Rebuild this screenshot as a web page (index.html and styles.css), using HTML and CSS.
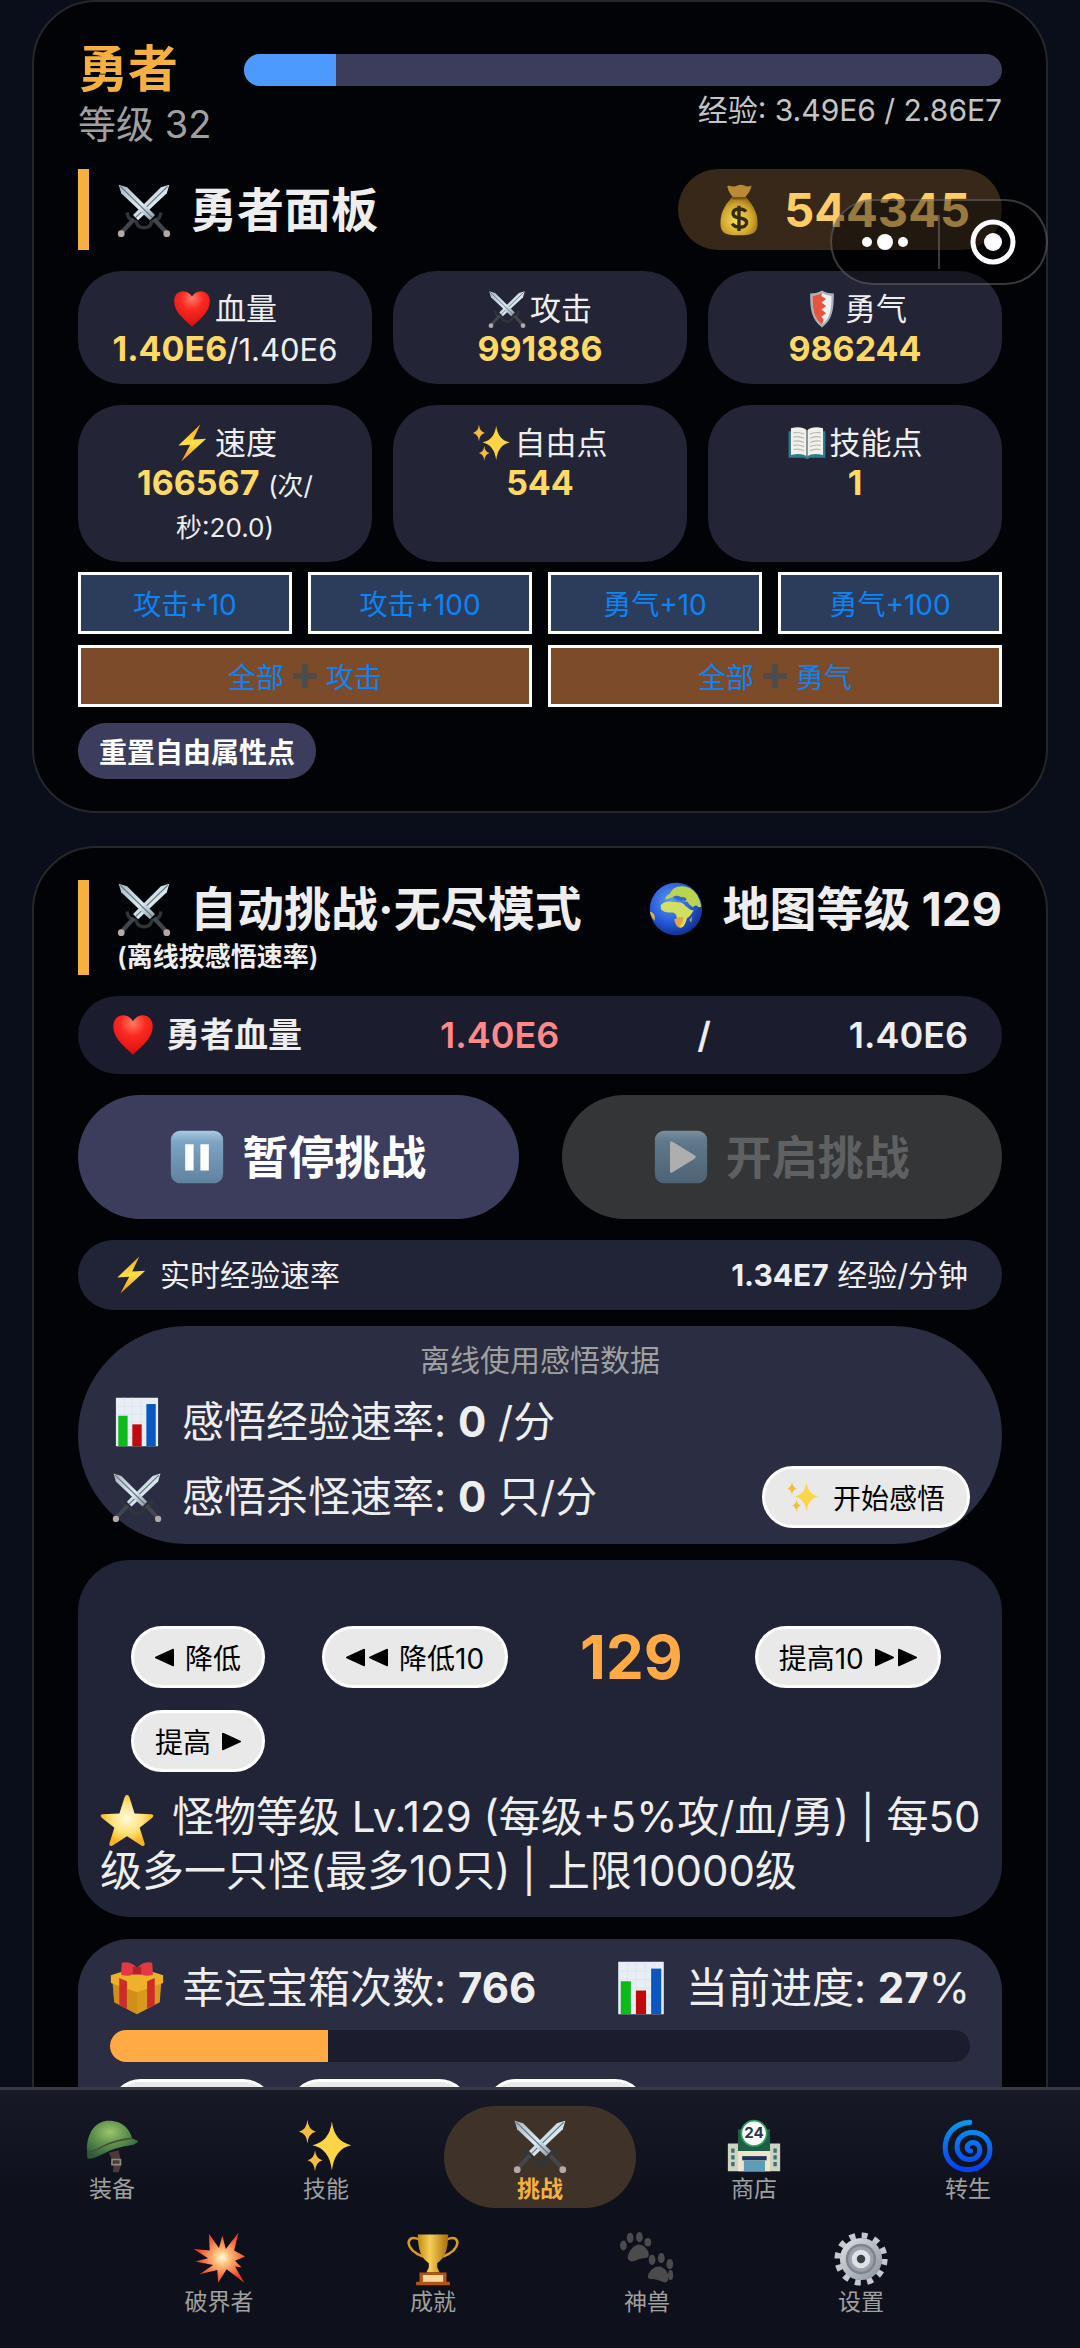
FILE: index.html
```html
<!DOCTYPE html>
<html lang="zh-CN">
<head>
    <meta charset="UTF-8">
    <meta name="viewport" content="width=device-width, initial-scale=1.0">
    <title>勇者</title>
    <link rel="stylesheet" href="styles.css">
</head>
<body>
    <!-- icon sprite -->
    <svg class="sprite" aria-hidden="true">
        <defs>
            <linearGradient id="g-blade" x1="0" y1="0" x2="1" y2="1"><stop offset="0" stop-color="#a9b6c0"/><stop offset=".6" stop-color="#dcebf3"/><stop offset="1" stop-color="#8798a4"/></linearGradient>
            <radialGradient id="g-heart" cx=".5" cy=".2" r=".8"><stop offset="0" stop-color="#ff7a66"/><stop offset=".4" stop-color="#fb2a20"/><stop offset="1" stop-color="#d80f10"/></radialGradient>
            <linearGradient id="g-gold" x1="0" y1="0" x2="1" y2="0"><stop offset="0" stop-color="#c48a12"/><stop offset=".4" stop-color="#f5cf55"/><stop offset="1" stop-color="#a86d08"/></linearGradient>
            <radialGradient id="g-bag" cx=".45" cy=".6" r=".6"><stop offset="0" stop-color="#f7e35c"/><stop offset=".7" stop-color="#cfa42c"/><stop offset="1" stop-color="#9a721a"/></radialGradient>
            <linearGradient id="g-bolt" x1="0" y1="0" x2="0" y2="1"><stop offset="0" stop-color="#ffa800"/><stop offset=".5" stop-color="#ffe14a"/><stop offset="1" stop-color="#f59300"/></linearGradient>
            <linearGradient id="g-key" x1="0" y1="0" x2="0" y2="1"><stop offset="0" stop-color="#a9cbe2"/><stop offset=".2" stop-color="#7ea5c4"/><stop offset="1" stop-color="#5f829f"/></linearGradient>
            <radialGradient id="g-sea" cx=".4" cy=".35" r=".7"><stop offset="0" stop-color="#5b9cf5"/><stop offset=".6" stop-color="#2458d8"/><stop offset="1" stop-color="#122b86"/></radialGradient>
            <radialGradient id="g-star" cx=".5" cy=".45" r=".5"><stop offset="0" stop-color="#fffbe0"/><stop offset=".6" stop-color="#ffe27a"/><stop offset="1" stop-color="#f9b41c"/></radialGradient>
            <radialGradient id="g-helmet" cx=".45" cy=".3" r=".7"><stop offset="0" stop-color="#9cc46c"/><stop offset=".5" stop-color="#5c8f4c"/><stop offset="1" stop-color="#2e5a3d"/></radialGradient>
            <radialGradient id="g-boom" cx=".55" cy=".5" r=".5"><stop offset="0" stop-color="#fffde0"/><stop offset=".3" stop-color="#ffc07a"/><stop offset="1" stop-color="#f03b22"/></radialGradient>
            <linearGradient id="g-spiral" x1="0" y1="0" x2="0" y2="1"><stop offset="0" stop-color="#0a98ea"/><stop offset="1" stop-color="#0a3ef2"/></linearGradient>
            <linearGradient id="g-steel" x1="0" y1="0" x2="1" y2="1"><stop offset="0" stop-color="#dfe4e8"/><stop offset="1" stop-color="#8b9299"/></linearGradient>
        </defs>
        <symbol id="i-swords" viewBox="0 0 64 64">
            <g>
                <path d="M62 2l-10 3-33 33 6 6 34-32z" fill="url(#g-blade)"/>
                <path d="M60 4L22 41" stroke="#65737e" stroke-width="1.5"/>
                <path d="M12 35q1 8 6 9t5 3q2 6 9 6" fill="none" stroke="#30353a" stroke-width="4"/>
                <path d="M20 43L6 58" stroke="#41464c" stroke-width="5"/>
                <circle cx="5" cy="60" r="4" fill="#b5a8a5"/>
            </g>
            <g>
                <path d="M2 2l10 3 33 33-6 6L5 12z" fill="url(#g-blade)"/>
                <path d="M4 4l38 37" stroke="#65737e" stroke-width="1.5"/>
                <path d="M52 35q-1 8-6 9t-5 3q-2 6-9 6" fill="none" stroke="#30353a" stroke-width="4"/>
                <path d="M44 43l14 15" stroke="#41464c" stroke-width="5"/>
                <circle cx="59" cy="60" r="4" fill="#b5a8a5"/>
            </g>
        </symbol>
        <symbol id="i-heart" viewBox="0 0 64 64">
            <path d="M32 62C20 50 2 38 2 19 2 8 9 2 17 2c7 0 12 4 15 9 3-5 8-9 15-9 8 0 15 6 15 17 0 19-18 31-30 43z" fill="url(#g-heart)"/>
        </symbol>
        <symbol id="i-bag" viewBox="0 0 64 64">
            <path d="M20 3q6 2 10 0t8 0q5 2 9 0-2 9-9 15H26Q20 12 18 4z" fill="#b98b35"/>
            <path d="M24 17h16c6 6 14 16 14 30 0 12-5 15-22 15S10 59 10 47c0-14 8-24 14-30z" fill="url(#g-bag)"/>
            <path d="M24 18h16" stroke="#7c5413" stroke-width="3"/>
            <path d="M40 34c-2-4-15-5-15 2 0 8 16 3 16 11 0 7-14 7-17 1M32 27v30" fill="none" stroke="#382b10" stroke-width="4"/>
        </symbol>
        <symbol id="i-shield" viewBox="0 0 64 64">
            <path d="M32 1c7 4 14 5 20 5 0 26-2 44-20 57C14 50 12 32 12 6c6 0 13-1 20-5z" fill="#a9b0b6"/>
            <path d="M32 5c6 3 11 4 16 5 0 23-2 37-16 48C18 47 16 33 16 10c5-1 10-2 16-5z" fill="#eef0f2"/>
            <path d="M32 5l-1 5 8 5-8 6 8 6-8 6 8 6-8 6 4 5-3 8C18 47 16 33 16 10c5-1 10-2 16-5z" fill="#e5543f"/>
        </symbol>
        <symbol id="i-bolt" viewBox="0 0 64 64">
            <path d="M46 1L9 36l20-1L14 63l42-38-22 1z" fill="url(#g-bolt)"/>
        </symbol>
        <symbol id="i-sparkles" viewBox="0 0 64 64">
            <path d="M39 3q3 24 23 28-20 4-23 30-3-26-23-30 20-4 23-28z" fill="#fbd545"/>
            <path d="M10 1q1 12 10 14-9 2-10 14-1-12-10-14 9-2 10-14z" fill="#f5bd3d"/>
            <path d="M19 37q1 10 9 12-8 2-9 13-1-11-9-13 8-2 9-12z" fill="#f5bd3d"/>
        </symbol>
        <symbol id="i-book" viewBox="0 0 64 64">
            <path d="M1 12h62v45H37q-5 4-10 0H1z" fill="#2f7c8c"/>
            <path d="M5 7q18-4 26 3v44q-8-6-26-2zM59 7q-18-4-26 3v44q8-6 26-2z" fill="#f2f0ea"/>
            <path d="M9 15q10-2 18 2M9 22q10-2 18 2M9 29q10-2 18 2M9 36q10-2 18 2M9 43q10-2 18 2M55 15q-10-2-18 2M55 22q-10-2-18 2M55 29q-10-2-18 2M55 36q-10-2-18 2M55 43q-10-2-18 2" fill="none" stroke="#b9b7b0" stroke-width="2"/>
            <path d="M32 10v45" stroke="#8f8c84" stroke-width="2"/>
        </symbol>
        <symbol id="i-pause" viewBox="0 0 64 64">
            <rect x="1" y="1" width="62" height="62" rx="11" fill="url(#g-key)"/>
            <path d="M18 17h10v31H18zM36 17h10v31H36z" fill="#fff"/>
        </symbol>
        <symbol id="i-play" viewBox="0 0 64 64">
            <rect x="1" y="1" width="62" height="62" rx="11" fill="url(#g-key)"/>
            <path d="M19 15q0-3 3-1l26 16q3 2 0 4L22 50q-3 2-3-1z" fill="#fff"/>
        </symbol>
        <symbol id="i-globe" viewBox="0 0 64 64">
            <circle cx="32" cy="32" r="31" fill="url(#g-sea)"/>
            <path d="M14 27q4-4 10-4l10 1q6 0 9 4l6 5q2 1 4 0-3 7-8 10-1 4-3 8-2 4-6 3-3-6-3-12-1-6-6-6-9 1-13-4 0-3 0-5z" fill="#d3df62"/>
            <path d="M19 20q2-5 6-6 1-5 8-8 14-4 24 9 4 7 5 14-3 2-5-1-3-1-5 2l-5-4q-2-4-6-3-3-3-7-3-4-3-9-1-3 2-6 1z" fill="#b9d451"/>
            <path d="M30 44q7-4 11-2-1 8-6 12-4-3-5-10z" fill="#e6a53b"/>
            <path d="M1 35q7 1 6 11Q2 42 1 35zM48 45l3-4-1 7z" fill="#d6b13c"/>
            <path d="M29 18q4-3 8 0l6 1q2 2 0 3l-9-1zM45 23l3 5" fill="#2e63d9" stroke="#2e63d9"/>
        </symbol>
        <symbol id="i-chart" viewBox="0 0 64 64">
            <path d="M5 1h54v62H5z" fill="#e8eef5"/>
            <path d="M5 12h54M5 22h54M5 32h54M5 42h54M5 52h54M16 1v62M26 1v62M37 1v62M48 1v62" stroke="#dbe3ec" stroke-width="1"/>
            <path d="M8 24h12v39H8z" fill="#0dbb18"/>
            <path d="M26 35h12v28H26z" fill="#c00a0a"/>
            <path d="M44 9h12v54H44z" fill="#0a57c2"/>
        </symbol>
        <symbol id="i-star" viewBox="0 0 64 64">
            <path d="M32 1q2 0 3 3l6 19 20 1q4 1 1 4L47 40l6 19q0 4-4 2L32 50 15 61q-4 2-4-2l6-19L2 28q-3-3 1-4l20-1 6-19q1-3 3-3z" fill="url(#g-star)"/>
        </symbol>
        <symbol id="i-gift" viewBox="0 0 64 64">
            <path d="M3 22l29 11 29-11-2 27-27 14L5 49z" fill="#d99a1c"/>
            <path d="M1 17L32 7l31 10v9L32 37 1 26z" fill="#eeb12a"/>
            <path d="M32 37v26L5 49 3 27z" fill="#c98812" opacity=".6"/>
            <path d="M11 20l9 4v33l-9-5zM53 20l-9 4v33l9-5z" fill="#cf2a2c"/>
            <path d="M14 2q10-2 18 6 8-8 18-6l1 14q-10 4-19-3-9 7-19 3z" fill="#e23a45"/>
            <path d="M27 7h10v9H27z" fill="#b51f30"/>
        </symbol>
        <symbol id="i-helmet" viewBox="0 0 64 64">
            <path d="M28 40l12-3 3 17-3 9h-7l1-11z" fill="#4b3a38"/>
            <path d="M32 48h10v6H32z" fill="none" stroke="#8f8a86" stroke-width="2"/>
            <path d="M3 47C-1 18 12 2 28 2c18 0 25 11 28 21l7 3q-2 4-9 5-20 3-34 11-9 5-17 5z" fill="url(#g-helmet)"/>
            <path d="M3 39q8 0 15-5 16-9 38-11" fill="none" stroke="#4a4f3a" stroke-width="2"/>
        </symbol>
        <symbol id="i-boom" viewBox="0 0 64 64">
            <path d="M20 2l12 17 4-15 4 16 15-19-5 21 13 7-12 5 8 8-8-1 11 19-17-13-4-3-10 16-1-15-21 5 16-11L4 35l15-4L2 20l19 2z" fill="url(#g-boom)"/>
        </symbol>
        <symbol id="i-trophy" viewBox="0 0 64 64">
            <path d="M16 9Q4 4 3 13q1 10 17 16M48 9q12-5 13 4-1 10-17 16" fill="none" stroke="#d99a22" stroke-width="3"/>
            <path d="M14 3h36c0 18-4 28-13 34v5l3 6H24l3-6v-5C18 31 14 21 14 3z" fill="url(#g-gold)"/>
            <path d="M16 48h32v11h4v4H12v-4h4z" fill="#b6530f"/>
            <path d="M20 51h24v8H20z" fill="#f7d9a0"/>
        </symbol>
        <symbol id="i-cyclone" viewBox="0 0 64 64">
            <path d="M34 4C16 5 5 18 5 34c0 15 11 26 27 26 15 0 26-11 26-24 0-12-9-20-21-20-11 0-18 8-18 17 0 8 6 15 15 15 7 0 12-5 12-11 0-5-3-9-8-9-4 0-7 3-7 6 0 2 2 4 4 4" fill="none" stroke="url(#g-spiral)" stroke-width="6" stroke-linecap="round"/>
        </symbol>
        <symbol id="i-paws" viewBox="0 0 64 64">
            <g fill="#4b4b4b">
                <path d="M21 15c7-1 14 7 13 13-1 4-6 2-11 4s-10 5-13 1 3-16 11-18z"/>
                <ellipse cx="4" cy="16" rx="4" ry="6"/><ellipse cx="12" cy="7" rx="4" ry="6"/><ellipse cx="23" cy="6" rx="4" ry="6"/><ellipse cx="33" cy="12" rx="4" ry="5"/>
                <path d="M46 41c8 0 13 10 11 16-2 5-7 2-12 0s-12 0-12-4 6-12 13-12z"/>
                <ellipse cx="38" cy="33" rx="4" ry="6"/><ellipse cx="49" cy="31" rx="4" ry="6"/><ellipse cx="59" cy="38" rx="4" ry="6"/><ellipse cx="60" cy="51" rx="3" ry="6"/>
            </g>
        </symbol>
        <symbol id="i-gear" viewBox="0 0 64 64">
            <circle cx="32" cy="32" r="28" fill="none" stroke="#c3c9ce" stroke-width="7" stroke-dasharray="7 7.66"/>
            <circle cx="32" cy="32" r="25" fill="url(#g-steel)"/>
            <circle cx="32" cy="32" r="18" fill="#7d868e"/>
            <circle cx="32" cy="32" r="15" fill="#9aa3ab"/>
            <circle cx="32" cy="32" r="11" fill="#dde2e6"/>
            <circle cx="32" cy="32" r="5" fill="#3a3f44"/>
        </symbol>
        <symbol id="i-plus" viewBox="0 0 64 64">
            <path d="M25 3h14v22h22v14H39v22H25V39H3V25h22z" fill="#4c4c4c"/>
        </symbol>
        <symbol id="i-left" viewBox="0 0 24 24"><path d="M1 12L23 2v20z" stroke="#000" stroke-width="2" stroke-linejoin="round"/></symbol>
        <symbol id="i-right" viewBox="0 0 24 24"><path d="M23 12L1 2v20z" stroke="#000" stroke-width="2" stroke-linejoin="round"/></symbol>
    </svg>

    <main class="content">
        <section class="card">
            <div class="hero-head">
                <div class="hero-name">
                    <h1>勇者</h1>
                    <p>等级 32</p>
                </div>
                <div class="hero-exp">
                    <div class="bar bar-exp"><div class="bar-fill" style="width: 12.2%"></div></div>
                    <p>经验: 3.49E6 / 2.86E7</p>
                </div>
            </div>

            <div class="section-head">
                <h2 class="section-title"><svg class="icon"><use href="#i-swords"/></svg>勇者面板</h2>
                <div class="gold"><svg class="icon"><use href="#i-bag"/></svg>544345</div>
            </div>

            <div class="stats">
                <div class="stat">
                    <div class="stat-label"><svg class="icon"><use href="#i-heart"/></svg>血量</div>
                    <div><b>1.40E6</b>/1.40E6</div>
                </div>
                <div class="stat">
                    <div class="stat-label"><svg class="icon"><use href="#i-swords"/></svg>攻击</div>
                    <div><b>991886</b></div>
                </div>
                <div class="stat">
                    <div class="stat-label"><svg class="icon"><use href="#i-shield"/></svg>勇气</div>
                    <div><b>986244</b></div>
                </div>
                <div class="stat">
                    <div class="stat-label"><svg class="icon"><use href="#i-bolt"/></svg>速度</div>
                    <div><b>166567</b> <small>(次/<br>秒:20.0)</small></div>
                </div>
                <div class="stat">
                    <div class="stat-label"><svg class="icon"><use href="#i-sparkles"/></svg>自由点</div>
                    <div><b>544</b></div>
                </div>
                <div class="stat">
                    <div class="stat-label"><svg class="icon"><use href="#i-book"/></svg>技能点</div>
                    <div><b>1</b></div>
                </div>
            </div>

            <div class="add-grid">
                <button type="button" class="btn-add">攻击+10</button>
                <button type="button" class="btn-add">攻击+100</button>
                <button type="button" class="btn-add">勇气+10</button>
                <button type="button" class="btn-add">勇气+100</button>
                <button type="button" class="btn-add btn-all">全部<svg class="icon"><use href="#i-plus"/></svg>攻击</button>
                <button type="button" class="btn-add btn-all">全部<svg class="icon"><use href="#i-plus"/></svg>勇气</button>
            </div>

            <button type="button" class="btn-reset">重置自由属性点</button>
        </section>

        <section class="card">
            <div class="section-head">
                <div class="section-title">
                    <h2><svg class="icon"><use href="#i-swords"/></svg>自动挑战·无尽模式</h2>
                    <p class="section-sub">(离线按感悟速率)</p>
                </div>
                <h2 class="map-level"><svg class="icon"><use href="#i-globe"/></svg>地图等级 129</h2>
            </div>

            <div class="row row-hp">
                <span class="row-label"><svg class="icon"><use href="#i-heart"/></svg>勇者血量</span>
                <span class="hp-now">1.40E6</span>
                <span>/</span>
                <span>1.40E6</span>
            </div>

            <div class="battle">
                <button type="button" class="btn-battle"><svg class="icon"><use href="#i-pause"/></svg>暂停挑战</button>
                <button type="button" class="btn-battle" disabled><svg class="icon"><use href="#i-play"/></svg>开启挑战</button>
            </div>

            <div class="row row-rate">
                <span class="row-label"><svg class="icon"><use href="#i-bolt"/></svg>实时经验速率</span>
                <span><b>1.34E7</b> 经验/分钟</span>
            </div>

            <div class="insight">
                <p class="insight-tip">离线使用感悟数据</p>
                <div class="insight-row"><span class="line"><svg class="icon"><use href="#i-chart"/></svg><span>感悟经验速率: <b>0</b> /分</span></span></div>
                <div class="insight-row">
                    <span class="line"><svg class="icon"><use href="#i-swords"/></svg><span>感悟杀怪速率: <b>0</b> 只/分</span></span>
                    <button type="button" class="btn-pill btn-insight"><svg class="icon"><use href="#i-sparkles"/></svg>开始感悟</button>
                </div>
            </div>

            <div class="level">
                <div class="level-controls">
                    <button type="button" class="btn-pill"><svg class="arrow"><use href="#i-left"/></svg>降低</button>
                    <button type="button" class="btn-pill"><span class="arrows"><svg class="arrow"><use href="#i-left"/></svg><svg class="arrow"><use href="#i-left"/></svg></span>降低10</button>
                    <strong class="level-num">129</strong>
                    <button type="button" class="btn-pill">提高10<span class="arrows"><svg class="arrow"><use href="#i-right"/></svg><svg class="arrow"><use href="#i-right"/></svg></span></button>
                    <button type="button" class="btn-pill">提高<svg class="arrow"><use href="#i-right"/></svg></button>
                </div>
                <p class="level-desc"><svg class="icon"><use href="#i-star"/></svg>怪物等级 Lv.129 (每级+5%攻/血/勇) | 每50级多一只怪(最多10只) | 上限10000级</p>
            </div>

            <div class="lucky">
                <div class="lucky-head">
                    <span class="line"><svg class="icon"><use href="#i-gift"/></svg><span>幸运宝箱次数: <b>766</b></span></span>
                    <span class="line"><svg class="icon"><use href="#i-chart"/></svg><span>当前进度: <b>27</b>%</span></span>
                </div>
                <div class="bar bar-lucky"><div class="bar-fill" style="width: 25.3%"></div></div>
                <div class="lucky-actions">
                    <button type="button" class="btn-pill" aria-label="开一次"></button>
                    <button type="button" class="btn-pill" aria-label="开十次"></button>
                    <button type="button" class="btn-pill" aria-label="全部开"></button>
                </div>
            </div>
        </section>
    </main>

    <div class="capsule">
        <button type="button" aria-label="更多">
            <svg width="46" height="46" viewBox="0 0 46 46" fill="#fff"><circle cx="5" cy="23" r="5"/><circle cx="23" cy="23" r="8"/><circle cx="41" cy="23" r="5"/></svg>
        </button>
        <button type="button" aria-label="关闭">
            <svg width="46" height="46" viewBox="0 0 46 46"><circle cx="23" cy="23" r="20" fill="none" stroke="#fff" stroke-width="5"/><circle cx="23" cy="23" r="9" fill="#fff"/></svg>
        </button>
    </div>

    <nav class="tabbar">
        <a href="#equip"><svg class="icon"><use href="#i-helmet"/></svg>装备</a>
        <a href="#skill"><svg class="icon"><use href="#i-sparkles"/></svg>技能</a>
        <a href="#battle" class="active"><svg class="icon"><use href="#i-swords"/></svg>挑战</a>
        <a href="#shop">
            <svg class="icon" viewBox="0 0 64 64">
                <path d="M1 29h62v33H1z" fill="#cfd3c2"/>
                <path d="M13 12h38v27H13z" fill="#1f5d45"/>
                <path d="M13 38h38v24H13z" fill="#eee6cc"/>
                <path d="M18 44h29v5H18z" fill="#23345c"/>
                <path d="M20 49h25v13H20z" fill="#5f9cb5"/>
                <path d="M5 35h4v5H5zM5 43h4v5H5zM5 51h4v5H5zM55 35h4v5h-4zM55 43h4v5h-4zM55 51h4v5h-4z" fill="#3e6f7a"/>
                <circle cx="32" cy="17" r="15" fill="#fff" stroke="#2aa35c" stroke-width="2"/>
                <text x="32" y="23" text-anchor="middle" font-size="18" font-weight="700" fill="#2a3550">24</text>
            </svg>商店</a>
        <a href="#rebirth"><svg class="icon"><use href="#i-cyclone"/></svg>转生</a>
        <a href="#breaker"><svg class="icon"><use href="#i-boom"/></svg>破界者</a>
        <a href="#achieve"><svg class="icon"><use href="#i-trophy"/></svg>成就</a>
        <a href="#pet"><svg class="icon"><use href="#i-paws"/></svg>神兽</a>
        <a href="#setting"><svg class="icon"><use href="#i-gear"/></svg>设置</a>
    </nav>
</body>
</html>
```

FILE: styles.css
```css
* {
    margin: 0;
    padding: 0;
    box-sizing: border-box;
}

:root {
    --bg: #0a0d1a;
    --card: #020307;
    --line: #26272b;
    --text: #eeeeee;
    --muted: #a0a0a0;
    --gold: #f5b041;
    --number: #ffd966;
    --orange: #ffaa44;
    --panel: #232536;
    --panel-light: #2b2d42;
    --panel-dark: #1b1d2f;
    --indigo: #3c3d5c;
}

body {
    height: 100vh;
    display: flex;
    flex-direction: column;
    background: var(--bg);
    color: var(--text);
    font-family: Inter, "Noto Sans CJK SC", sans-serif;
    font-size: 30px;
    line-height: 40px;
}

button {
    font-family: inherit;
    cursor: pointer;
}

.sprite {
    position: absolute;
    width: 0;
    height: 0;
}

.icon {
    width: 54px;
    height: 54px;
    flex-shrink: 0;
}

.content {
    flex: 1;
    min-height: 0;
    overflow-y: auto;
    scrollbar-width: none;
    padding: 0 32px;
}

.card {
    background: var(--card);
    border: 2px solid var(--line);
    border-radius: 64px;
    padding: 32px 44px;
    margin-bottom: 33px;
}

/* hero header */
.hero-head {
    display: flex;
    margin-bottom: 25px;
}

.hero-name {
    width: 166px;
}

.hero-name h1 {
    color: var(--gold);
    font-size: 50px;
    line-height: 70px;
}

.hero-name p {
    color: var(--muted);
    font-size: 38px;
}

.hero-exp {
    flex: 1;
    padding-top: 20px;
}

.hero-exp p {
    margin-top: 4px;
    text-align: right;
    color: #c4c4c4;
}

.bar {
    height: 32px;
    border-radius: 16px;
    overflow: hidden;
}

.bar-fill {
    height: 100%;
}

.bar-exp {
    background: var(--indigo);
}

.bar-exp .bar-fill {
    background: #4d9aff;
}

/* section headers */
.section-head {
    display: flex;
    align-items: flex-start;
    justify-content: space-between;
    margin-bottom: 21px;
}

.section-head h2 {
    display: flex;
    align-items: center;
    gap: 19px;
    font-size: 47px;
    line-height: 58px;
}

.section-title {
    align-self: stretch;
    border-left: 11px solid var(--gold);
    padding-left: 28px;
}

.section-sub {
    font-size: 26px;
    font-weight: 600;
    line-height: 37px;
}

.gold {
    display: flex;
    align-items: center;
    gap: 18px;
    height: 81px;
    padding: 0 32px 0 34px;
    border-radius: 41px;
    background: #38281a;
    color: #ffcc66;
    font-size: 47px;
    font-weight: 700;
}

/* stats */
.stats {
    display: grid;
    grid-template-columns: repeat(3, 1fr);
    gap: 21px;
    margin-bottom: 10px;
}

.stat {
    padding: 18px 24px 14px;
    border-radius: 44px;
    background: var(--panel);
    text-align: center;
    font-size: 31px;
}

.stat-label {
    display: flex;
    align-items: center;
    justify-content: center;
    gap: 4px;
}

.stat-label .icon {
    width: 38px;
    height: 38px;
}

.stat b {
    color: var(--number);
    font-size: 34px;
}

.stat small {
    font-size: 26px;
}

.add-grid {
    display: grid;
    grid-template-columns: 214fr 224fr 214fr 224fr;
    gap: 11px 16px;
    margin-bottom: 16px;
}

.btn-add {
    display: flex;
    align-items: center;
    justify-content: center;
    gap: 8px;
    height: 62px;
    border: 3px solid #ffffff;
    background: #2c3d5c;
    color: #0f83f2;
    font-size: 28px;
}

.btn-add .icon {
    width: 26px;
    height: 26px;
}

.btn-all {
    grid-column: span 2;
    background: #7b4b2a;
}

.btn-reset {
    display: block;
    height: 56px;
    padding: 0 21px;
    border: none;
    border-radius: 28px;
    background: var(--indigo);
    color: #ffffff;
    font-size: 28px;
    font-weight: 700;
}

/* challenge */
.row {
    display: flex;
    align-items: center;
    justify-content: space-between;
    padding: 0 34px;
}

.row-label {
    display: flex;
    align-items: center;
}

.row-hp {
    height: 78px;
    margin-bottom: 21px;
    border-radius: 39px;
    background: var(--panel-dark);
    font-size: 36px;
    font-weight: 600;
}

.row-hp .row-label {
    gap: 12px;
    font-size: 34px;
}

.row-hp .icon {
    width: 42px;
    height: 42px;
}

.hp-now {
    color: #ff8888;
}

.battle {
    display: grid;
    grid-template-columns: 1fr 1fr;
    gap: 43px;
    margin-bottom: 21px;
}

.btn-battle {
    display: flex;
    align-items: center;
    justify-content: center;
    gap: 18px;
    height: 124px;
    border: none;
    border-radius: 62px;
    background: var(--indigo);
    color: #ffffff;
    font-size: 46px;
    font-weight: 700;
    line-height: 54px;
}

.btn-battle:disabled {
    background: #343536;
    color: #5f6061;
}

.btn-battle:disabled .icon {
    opacity: 0.6;
}

.row-rate {
    height: 70px;
    margin-bottom: 16px;
    border-radius: 35px;
    background: #212336;
}

.row-rate .row-label {
    gap: 10px;
}

.row-rate .icon {
    width: 38px;
    height: 38px;
}

.line {
    display: flex;
    align-items: center;
    gap: 18px;
}

.insight {
    padding: 16px 32px;
    margin-bottom: 16px;
    border-radius: 109px;
    background: var(--panel-light);
    font-size: 42px;
}

.insight .line .icon {
    height: 50px;
}

.insight-tip {
    color: var(--muted);
    font-size: 30px;
    line-height: 36px;
    text-align: center;
}

.insight-row {
    display: flex;
    align-items: center;
    justify-content: space-between;
    height: 88px;
}

.insight-row:last-child {
    height: 62px;
}

.btn-pill {
    display: flex;
    align-items: center;
    justify-content: center;
    gap: 11px;
    height: 62px;
    padding: 0 21px;
    border: 3px solid #ffffff;
    border-radius: 31px;
    background: #e9e9e9;
    color: #000000;
    font-size: 28px;
}

.btn-insight {
    padding: 0 22px;
    gap: 14px;
}

.btn-pill .icon {
    width: 32px;
    height: 32px;
}

.arrow {
    width: 19px;
    height: 19px;
}

.arrows {
    display: flex;
    gap: 4px;
}

.level {
    padding: 66px 12px 19px 22px;
    margin-bottom: 22px;
    border-radius: 52px;
    background: #212336;
    font-size: 42px;
    line-height: 54px;
}

.level-controls {
    display: flex;
    flex-wrap: wrap;
    gap: 22px 57px;
    padding: 0 10px 0 31px;
    margin-bottom: 18px;
}

.level-num {
    padding: 0 15px;
    color: var(--orange);
    font-size: 60px;
    line-height: 62px;
}

.level-desc .icon {
    margin: -6px 18px -6px 0;
    vertical-align: middle;
}

.lucky {
    padding: 22px 32px;
    border-radius: 52px;
    background: var(--panel-light);
    font-size: 42px;
    line-height: 54px;
}

.lucky-head {
    display: flex;
    justify-content: space-between;
    margin-bottom: 15px;
}

.bar-lucky {
    margin-bottom: 17px;
    background: var(--panel-dark);
}

.bar-lucky .bar-fill {
    background: var(--orange);
}

.lucky-actions {
    display: grid;
    grid-template-columns: 164px 181px 161px;
    gap: 15px;
}

/* floating capsule */
.capsule {
    position: fixed;
    top: 199px;
    right: 32px;
    width: 218px;
    height: 86px;
    display: flex;
    align-items: center;
    border: 2px solid rgba(160, 160, 160, 0.35);
    border-radius: 43px;
    background: rgba(0, 0, 0, 0.4);
}

.capsule button {
    flex: 1;
    display: flex;
    align-items: center;
    justify-content: center;
    height: 54px;
    border: none;
    background: none;
}

.capsule button + button {
    border-left: 2px solid rgba(160, 160, 160, 0.35);
}

/* bottom tabs */
.tabbar {
    display: flex;
    flex-wrap: wrap;
    justify-content: center;
    gap: 11px 22px;
    padding: 16px 16px 27px;
    border-top: 3px solid #373944;
    background: linear-gradient(#171926, #0e101c 40%);
}

.tabbar a {
    flex: 0 0 calc((100% - 88px) / 5);
    display: flex;
    flex-direction: column;
    align-items: center;
    gap: 2px;
    height: 102px;
    padding-top: 13px;
    border-radius: 51px;
    color: var(--muted);
    font-size: 23px;
    line-height: 28px;
    text-decoration: none;
}

.tabbar a.active {
    background: #3f3329;
    color: var(--gold);
    font-weight: 700;
}
```
